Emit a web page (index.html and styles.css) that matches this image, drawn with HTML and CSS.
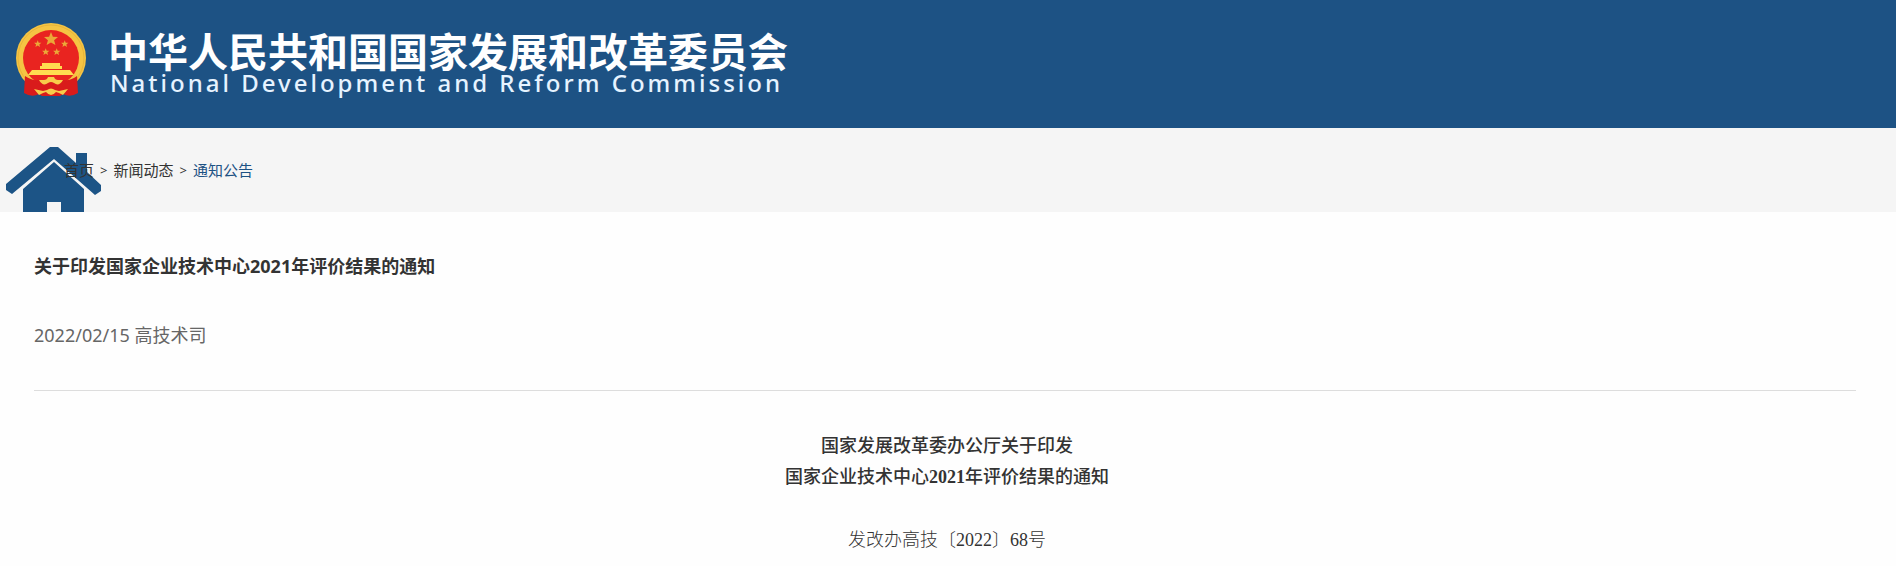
FILE: index.html
```html
<!DOCTYPE html>
<html lang="zh-CN">
<head>
<meta charset="utf-8">
<title>关于印发国家企业技术中心2021年评价结果的通知</title>
<link rel="stylesheet" href="styles.css">
</head>
<body>
<header class="site-header">
  <svg class="emblem" viewBox="0 0 72 76" aria-hidden="true">
    <circle cx="36" cy="36" r="35" fill="#f5c443"/>
    <circle cx="36" cy="36" r="33" fill="none" stroke="#e8b43a" stroke-width="1"/>
    <circle cx="36" cy="36" r="28" fill="#e92420"/>
    <g fill="#eba838">
      <path id="star" d="M36 10l1.900 4.700 5.100.3-3.900 3.200 1.300 4.900-4.400-2.700-4.400 2.700 1.300-4.900-3.900-3.200 5.100-.3z"/>
      <use href="#star" transform="translate(4 13) scale(.52)"/>
      <use href="#star" transform="translate(31 13) scale(.52)"/>
      <use href="#star" transform="translate(12 21) scale(.52)"/>
      <use href="#star" transform="translate(23 21) scale(.52)"/>
    </g>
    <path fill="#ffdc50" d="M27 41h18v3h2v3H25v-3h2zM17 48h38l4 5H13z"/>
    <path fill="#d91b1b" d="M10 54q7 5 14 4h24q8 1 14-4l1 17q-8 5-15 1l-3 2H27l-3-2q-7 4-15-1z"/>
    <path fill="#f8cc4a" d="M24 58h5q3 0 4-3h6q1 3 4 3h5q-4 7-9 3-3-2-6 0-5 4-9-3z"/>
    <path fill="#f8cc4a" d="M19 67l9 2 4-1q4-3 8 0l4 1 9-2-5 6-4-2-3-1q-5 6-10 0l-3 1-4 2z"/>
  </svg>
  <div class="brand">
    <div class="brand-cn">中华人民共和国国家发展和改革委员会</div>
    <div class="brand-en" lang="en">National Development and Reform Commission</div>
  </div>
</header>
<nav class="crumbs" aria-label="面包屑">
  <svg class="home" viewBox="0 0 96 66" aria-hidden="true">
    <path fill="#1c5486" d="M44 1h8l18 16V7h11v19l14 13v6l-6 4L48 13 6 48l-6-4v-6z"/>
    <path fill="#1c5486" d="M17 43l31-27 30 27v23H55V56H41v10H17z"/>
  </svg>
  <div class="trail">
    <a href="#">首页</a><span>&gt;</span><a href="#">新闻动态</a><span>&gt;</span><a class="current" href="#" aria-current="page">通知公告</a>
  </div>
</nav>
<main class="article">
  <h1 class="title">关于印发国家企业技术中心2021年评价结果的通知</h1>
  <p class="meta">2022/02/15 高技术司</p>
  <div class="document">
    <h2 class="doc-title">国家发展改革委办公厅关于印发<br>国家企业技术中心<b>2021</b>年评价结果的通知</h2>
    <p class="doc-number">发改办高技〔2022〕68号</p>
  </div>
</main>
</body>
</html>
```
FILE: styles.css
```css
* { box-sizing: border-box; }
body {
  margin: 0;
  background: #fefefe;
  color: #333;
  font-family: "Noto Sans", "Noto Sans CJK SC", sans-serif;
}
.site-header {
  display: flex;
  align-items: flex-start;
  gap: 21px;
  padding: 22px 15px 30px;
  background: #1d5284;
  color: #fff;
}
.emblem { width: 72px; height: 76px; flex: none; }
.brand { padding-top: 8px; white-space: nowrap; }
.brand-cn {
  font: 700 40px/40px "Noto Sans CJK SC", sans-serif;
}
.brand-en {
  padding-left: 2px;
  font-size: 24px;
  line-height: 26px;
  font-weight: 500;
  letter-spacing: 3px;
  color: #e6f3ff;
}
.crumbs {
  position: relative;
  padding: 30px 64px;
  background: #f5f5f5;
  font-size: 15px;
  line-height: 24px;
}
.home {
  position: absolute;
  left: 6px;
  bottom: 0;
  width: 96px;
  height: 66px;
}
.trail { position: relative; display: flex; gap: 6px; }
.trail a { color: #333; text-decoration: none; }
.trail .current { color: #1d5284; }
.trail span { font-size: 13px; }
.article { padding: 40px 40px 12px 34px; }
.title { margin: 0; font-size: 18px; line-height: 28px; font-weight: 700; }
.meta {
  margin: 0;
  padding: 40px 0;
  border-bottom: 1px solid #ddd;
  font-size: 18px;
  line-height: 30px;
  color: #666;
}
.document {
  padding: 40px 0 0 4px;
  font-family: "Liberation Serif", "Noto Sans CJK SC", serif;
  text-align: center;
}
.doc-title { margin: 0; font-size: 18px; line-height: 31px; font-weight: 500; }
.doc-title b { font-weight: 700; }
.doc-number { margin: 32px 0 0; font-size: 18px; line-height: 31px; font-weight: 300; }
```
